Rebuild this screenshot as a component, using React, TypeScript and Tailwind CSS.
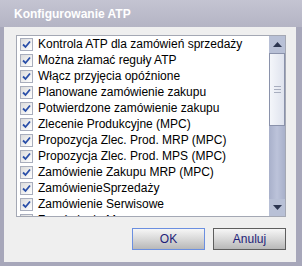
import React from 'react'

const items = [
  'Kontrola ATP dla zamówień sprzedaży',
  'Można złamać reguły ATP',
  'Włącz przyjęcia opóźnione',
  'Planowane zamówienie zakupu',
  'Potwierdzone zamówienie zakupu',
  'Zlecenie Produkcyjne (MPC)',
  'Propozycja Zlec. Prod. MRP (MPC)',
  'Propozycja Zlec. Prod. MPS (MPC)',
  'Zamówienie Zakupu MRP (MPC)',
  'ZamówienieSprzedaży',
  'Zamówienie Serwisowe',
  'Zamówienie Magazynowe',
]

function Check() {
  return (
    <span className="flex h-[13px] w-[13px] shrink-0 items-center justify-center border border-[#a9aebd] bg-gradient-to-br from-[#dcdcdc] to-[#ffffff]">
      <svg width="9" height="9" viewBox="0 0 9 9">
        <path d="M1 4.5 L3.5 7 L8 1.5" fill="none" stroke="#2a4fa8" strokeWidth="1.8" />
      </svg>
    </span>
  )
}

function ScrollBar() {
  return (
    <div className="flex w-[16px] shrink-0 flex-col bg-[#b3bbd3]">
      <div className="flex h-[17px] items-center justify-center bg-[#b8c0d6]">
        <svg width="9" height="5" viewBox="0 0 9 5"><path d="M0 5 L4.5 0 L9 5 Z" fill="#2c3550" /></svg>
      </div>
      <div className="flex h-[73px] flex-col items-center justify-center gap-[2px] border border-[#8a92ab] bg-gradient-to-r from-[#f4f6fa] to-[#dfe3ee]">
        <span className="h-px w-[7px] bg-[#a8aebf]" />
        <span className="h-px w-[7px] bg-[#a8aebf]" />
        <span className="h-px w-[7px] bg-[#a8aebf]" />
      </div>
      <div className="flex-1 bg-gradient-to-r from-[#a8b0ca] via-[#bcc3da] to-[#a8b0ca]" />
      <div className="flex h-[17px] items-center justify-center bg-[#b8c0d6]">
        <svg width="9" height="5" viewBox="0 0 9 5"><path d="M0 0 L4.5 5 L9 0 Z" fill="#2c3550" /></svg>
      </div>
    </div>
  )
}

function Btn({ label, focus }: { label: string; focus?: boolean }) {
  return (
    <button
      className={
        focus
          ? 'flex h-[22px] w-[73px] items-center justify-center border border-[#6b8fe0] bg-gradient-to-b from-[#f6f6f6] via-[#d8d8d8] to-[#b8b8b8] text-[12px] text-[#1e1e78]'
          : 'flex h-[22px] w-[73px] items-center justify-center border border-[#5e5e5e] bg-gradient-to-b from-[#f6f6f6] via-[#d8d8d8] to-[#b8b8b8] text-[12px] text-[#1e1e78]'
      }
    >
      {label}
    </button>
  )
}

export default function App() {
  return (
    <div
      className="flex h-[266px] w-[302px] flex-col bg-[#a7a7ba]"
      style={{ fontFamily: '"Liberation Sans", Arial, sans-serif' }}
    >
      <div className="flex h-[27px] shrink-0 items-center bg-gradient-to-b from-[#c4c4d2] to-[#b4b4c4] pl-[14px] text-[12px] font-bold text-white">
        Konfigurowanie ATP
      </div>
      <div className="mb-[4px] ml-[4px] mr-[6px] flex flex-1 flex-col bg-[#efefef] px-[12px] pr-[10px] pt-[8px] pb-[12px]">
        <div className="flex h-[182px] border border-[#a4a8b4] bg-white">
          <div className="flex-1 overflow-hidden">
            {items.map((t) => (
              <div key={t} className="flex h-[16px] items-center gap-[5px] pl-[3px] text-[12px] text-black">
                <Check />
                <span className="whitespace-nowrap">{t}</span>
              </div>
            ))}
          </div>
          <ScrollBar />
        </div>
        <div className="mt-auto flex justify-end gap-[8px]">
          <Btn label="OK" focus />
          <Btn label="Anuluj" />
        </div>
      </div>
    </div>
  )
}
